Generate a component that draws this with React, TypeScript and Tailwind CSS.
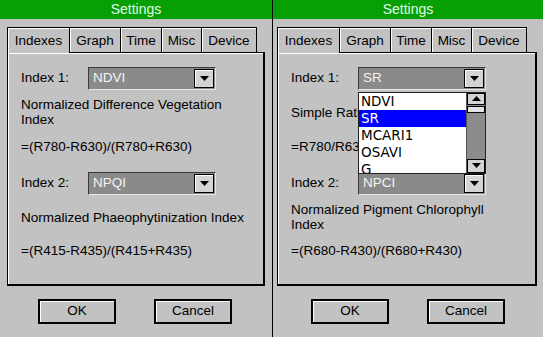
import React from 'react';

interface IndexInfo {
  value: string;
  lines: string[];
  formula: string;
}

interface PanelProps {
  widthClass: string;
  padClass: string;
  index1: IndexInfo;
  index2: IndexInfo;
  open?: boolean;
}

const tabs = [
  { label: 'Indexes', w: 'w-[63px]' },
  { label: 'Graph', w: 'w-[52px]' },
  { label: 'Time', w: 'w-[42px]' },
  { label: 'Misc', w: 'w-[41px]' },
  { label: 'Device', w: 'w-[56px]' },
];

const listItems = ['NDVI', 'SR', 'MCARI1', 'OSAVI', 'G'];

const Arrow = ({ up }: { up?: boolean }) => (
  <svg width="9" height="5" viewBox="0 0 9 5">
    <polygon points={up ? '0,5 9,5 4.5,0' : '0,0 9,0 4.5,5'} fill="#000" />
  </svg>
);

const Select = ({ value, open }: { value: string; open?: boolean }) => (
  <div className="relative">
    <div className="w-[128px] h-[23px] flex items-center bg-[#8a8a8a] border border-t-[#3a3a3a] border-l-[#3a3a3a] border-b-[#e8e8e8] border-r-[#e8e8e8]">
      <span className="flex-1 pl-[4px] text-[#f4f4f4] text-[13.5px]">{value}</span>
      <div className="w-[20px] h-[19px] mr-[1px] bg-[#d4d4d4] border border-black shadow-[inset_1px_1px_0_#fff] flex items-center justify-center">
        <Arrow />
      </div>
    </div>

    {/* open dropdown list */}
    {open && (
      <div className="absolute left-0 top-[25px] z-20 w-[128px] h-[82px] flex bg-white border border-[#222] overflow-hidden">
        <div className="flex-1 flex flex-col">
          {listItems.map((item) => (
            <div
              key={item}
              className={`h-[17px] shrink-0 flex items-center pl-[2px] text-[13.5px] font-['DejaVu_Sans',sans-serif] ${
                item === value ? 'bg-[#0000ff] text-white' : 'text-black'
              }`}
            >
              {item}
            </div>
          ))}
        </div>
        <div className="w-[19px] flex flex-col bg-[#8c8c8c] border-l border-[#555]">
          <div className="h-[12px] bg-[#d4d4d4] border border-black flex items-center justify-center">
            <Arrow up />
          </div>
          <div className="h-[7px] mt-[1px] bg-[#e4e4e4] border border-black" />
          <div className="flex-1" />
          <div className="h-[14px] bg-[#d4d4d4] border border-black flex items-center justify-center">
            <Arrow />
          </div>
        </div>
      </div>
    )}
  </div>
);

const SettingsPanel = ({ widthClass, padClass, index1, index2, open }: PanelProps) => {
  return (
    <div className={`flex flex-col h-[337px] bg-[#c2c2c2] ${widthClass}`}>
      <div className="h-[19px] bg-[#06a006] text-[#e2fbe2] text-[14px] flex items-center justify-center">Settings</div>

      <div className={`mt-[8px] ${padClass}`}>
        {/* Tabs */}
        <div className="flex items-end h-[25px]">
          {tabs.map((t, i) => (
            <div
              key={t.label}
              className={`${t.w} ${i > 0 ? '-ml-px' : ''} ${
                i === 0 ? 'h-[26px] -mb-px z-10' : 'h-[25px]'
              } bg-[#c2c2c2] border border-black border-b-0 shadow-[inset_1px_1px_0_#fff] flex items-start justify-center pt-[3px] text-[13.5px] text-black`}
            >
              {t.label}
            </div>
          ))}
        </div>

        {/* Tab body */}
        <div className="relative h-[234px] border-t border-l border-r-2 border-b-2 border-black shadow-[inset_1px_1px_0_#fff] pl-[13px] pt-[8px] text-[13.5px] text-black">
          <div className="h-[34px] flex items-center">
            <span className="w-[67px]">Index 1:</span>
            <Select value={index1.value} open={open} />
          </div>
          <div className="h-[34px] flex flex-col justify-center leading-[15px] whitespace-nowrap">
            {index1.lines.map((l) => (
              <span key={l}>{l}</span>
            ))}
          </div>
          <div className="h-[37px] flex items-center">{index1.formula}</div>
          <div className="h-[34px] flex items-center">
            <span className="w-[67px]">Index 2:</span>
            <Select value={index2.value} />
          </div>
          <div className="h-[34px] flex flex-col justify-center leading-[15px] whitespace-nowrap">
            {index2.lines.map((l) => (
              <span key={l}>{l}</span>
            ))}
          </div>
          <div className="h-[34px] flex items-center">{index2.formula}</div>
        </div>
      </div>

      {/* Buttons */}
      <div className="flex mt-[13px] pl-[38px] gap-[38px]">
        <button className="w-[78px] h-[25px] bg-[#c2c2c2] border-2 border-black shadow-[inset_1px_1px_0_#fff] text-[13.5px] text-black">
          OK
        </button>
        <button className="w-[78px] h-[25px] bg-[#c2c2c2] border-2 border-black shadow-[inset_1px_1px_0_#fff] text-[13.5px] text-black">
          Cancel
        </button>
      </div>
    </div>
  );
};

export default function App() {
  return (
    <div className="w-[548px] h-[342px] bg-white flex items-start font-['Liberation_Sans',Arial,sans-serif]">
      <SettingsPanel
        widthClass="w-[272px]"
        padClass="pl-[7px] pr-[7px]"
        index1={{ value: 'NDVI', lines: ['Normalized Difference Vegetation', 'Index'], formula: '=(R780-R630)/(R780+R630)' }}
        index2={{ value: 'NPQI', lines: ['Normalized Phaeophytinization Index'], formula: '=(R415-R435)/(R415+R435)' }}
      />
      <div className="w-px h-[337px] bg-black" />
      <SettingsPanel
        widthClass="w-[270px]"
        padClass="pl-[4px] pr-[6px]"
        open
        index1={{ value: 'SR', lines: ['Simple Ratio'], formula: '=R780/R630' }}
        index2={{ value: 'NPCI', lines: ['Normalized Pigment Chlorophyll', 'Index'], formula: '=(R680-R430)/(R680+R430)' }}
      />
    </div>
  );
}
